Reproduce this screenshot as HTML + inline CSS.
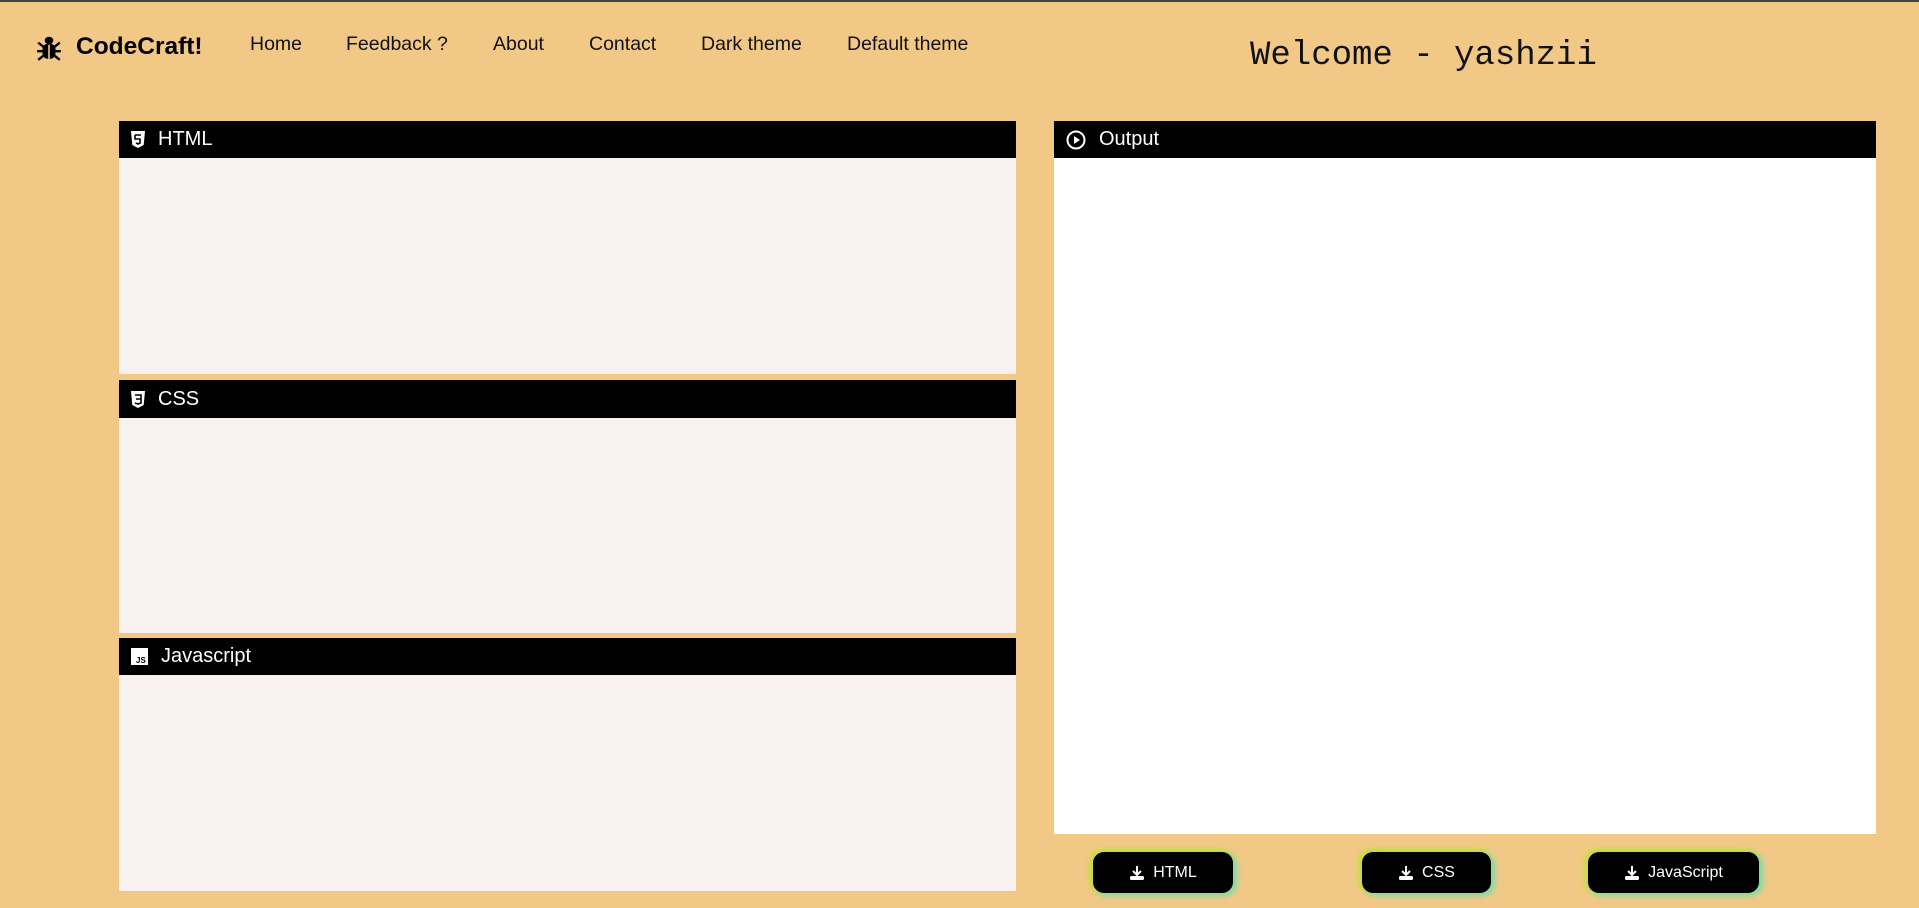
<!DOCTYPE html>
<html><head><meta charset="utf-8"><style>
*{margin:0;padding:0;box-sizing:border-box}
body{width:1919px;height:908px;background:#f2c887;font-family:"Liberation Sans",sans-serif;position:relative;overflow:hidden;border-top:2px solid #444}
.a{position:absolute}
.nav{top:31px;font-size:19.5px;color:#111}
.hd{background:#000;color:#fff;font-size:20px;display:flex;align-items:center;padding-left:12px;gap:13px}
.ta{background:#f9f0f0}
.btn{background:#000;color:#fff;border-radius:11px;display:flex;align-items:center;justify-content:center;gap:8px;font-size:16px;box-shadow:-3px -2px 7px #c8e030,3px 2px 7px #60e0c0,0 0 6px #a0e040}
</style></head><body>
<svg class="a" style="left:36px;top:32px" width="26" height="28" viewBox="0 0 24 26"><ellipse cx="12" cy="6" rx="4" ry="3.5"/><rect x="6" y="9" width="12" height="14" rx="5"/><path d="M2 8l5 4M22 8l-5 4M1 16h6M23 16h-6M2 24l5-4M22 24l-5-4" stroke="#000" stroke-width="2.2"/><path d="M12 10v13" stroke="#f2c887" stroke-width="1.5"/></svg>
<div class="a" style="left:76px;top:31px;font-size:24.5px;font-weight:bold">CodeCraft!</div>
<div class="a nav" style="left:250px">Home</div>
<div class="a nav" style="left:346px">Feedback ?</div>
<div class="a nav" style="left:493px">About</div>
<div class="a nav" style="left:589px">Contact</div>
<div class="a nav" style="left:701px">Dark theme</div>
<div class="a nav" style="left:847px">Default theme</div>
<div class="a" style="left:1250px;top:35px;font-family:'Liberation Mono',monospace;font-size:34px;color:#111">Welcome - yashzii</div>

<div class="a hd" style="left:119px;top:119px;width:897px;height:37px"><svg width="14" height="17" viewBox="0 0 14 17"><path d="M0 0h14l-1.3 14L7 17 1.3 14z" fill="#fff"/><path d="M4 4h6M4 4v4h5v4l-2 1-2-1" stroke="#000" stroke-width="1.6" fill="none"/></svg>HTML</div>
<div class="a ta" style="left:119px;top:156px;width:897px;height:216px"></div>
<div class="a hd" style="left:119px;top:378px;width:897px;height:38px"><svg width="14" height="17" viewBox="0 0 14 17"><path d="M0 0h14l-1.3 14L7 17 1.3 14z" fill="#fff"/><path d="M4 4h6v8l-3 1-3-1M5 8h5" stroke="#000" stroke-width="1.6" fill="none"/></svg>CSS</div>
<div class="a ta" style="left:119px;top:416px;width:897px;height:215px"></div>
<div class="a hd" style="left:119px;top:636px;width:897px;height:37px"><svg width="17" height="17" viewBox="0 0 17 17"><rect width="17" height="17" fill="#fff"/><text x="5" y="15" font-size="8" font-family="Liberation Sans" font-weight="bold">JS</text></svg>Javascript</div>
<div class="a ta" style="left:119px;top:673px;width:897px;height:216px"></div>

<div class="a hd" style="left:1054px;top:119px;width:822px;height:37px"><svg width="20" height="20" viewBox="0 0 20 20"><circle cx="10" cy="10" r="8.5" stroke="#fff" stroke-width="2" fill="none"/><path d="M8 6l6 4-6 4z" fill="#fff"/></svg>Output</div>
<div class="a" style="left:1054px;top:156px;width:822px;height:676px;background:#fff"></div>

<div class="a btn" style="left:1093px;top:850px;width:140px;height:41px"><svg width="16" height="16" viewBox="0 0 16 16"><path d="M8 1v8M4 6l4 4 4-4" stroke="#fff" stroke-width="2" fill="none"/><rect x="1" y="11" width="14" height="4" rx="1.5" fill="#fff"/></svg>HTML</div>
<div class="a btn" style="left:1362px;top:850px;width:129px;height:41px"><svg width="16" height="16" viewBox="0 0 16 16"><path d="M8 1v8M4 6l4 4 4-4" stroke="#fff" stroke-width="2" fill="none"/><rect x="1" y="11" width="14" height="4" rx="1.5" fill="#fff"/></svg>CSS</div>
<div class="a btn" style="left:1588px;top:850px;width:171px;height:41px"><svg width="16" height="16" viewBox="0 0 16 16"><path d="M8 1v8M4 6l4 4 4-4" stroke="#fff" stroke-width="2" fill="none"/><rect x="1" y="11" width="14" height="4" rx="1.5" fill="#fff"/></svg>JavaScript</div>
</body></html>
